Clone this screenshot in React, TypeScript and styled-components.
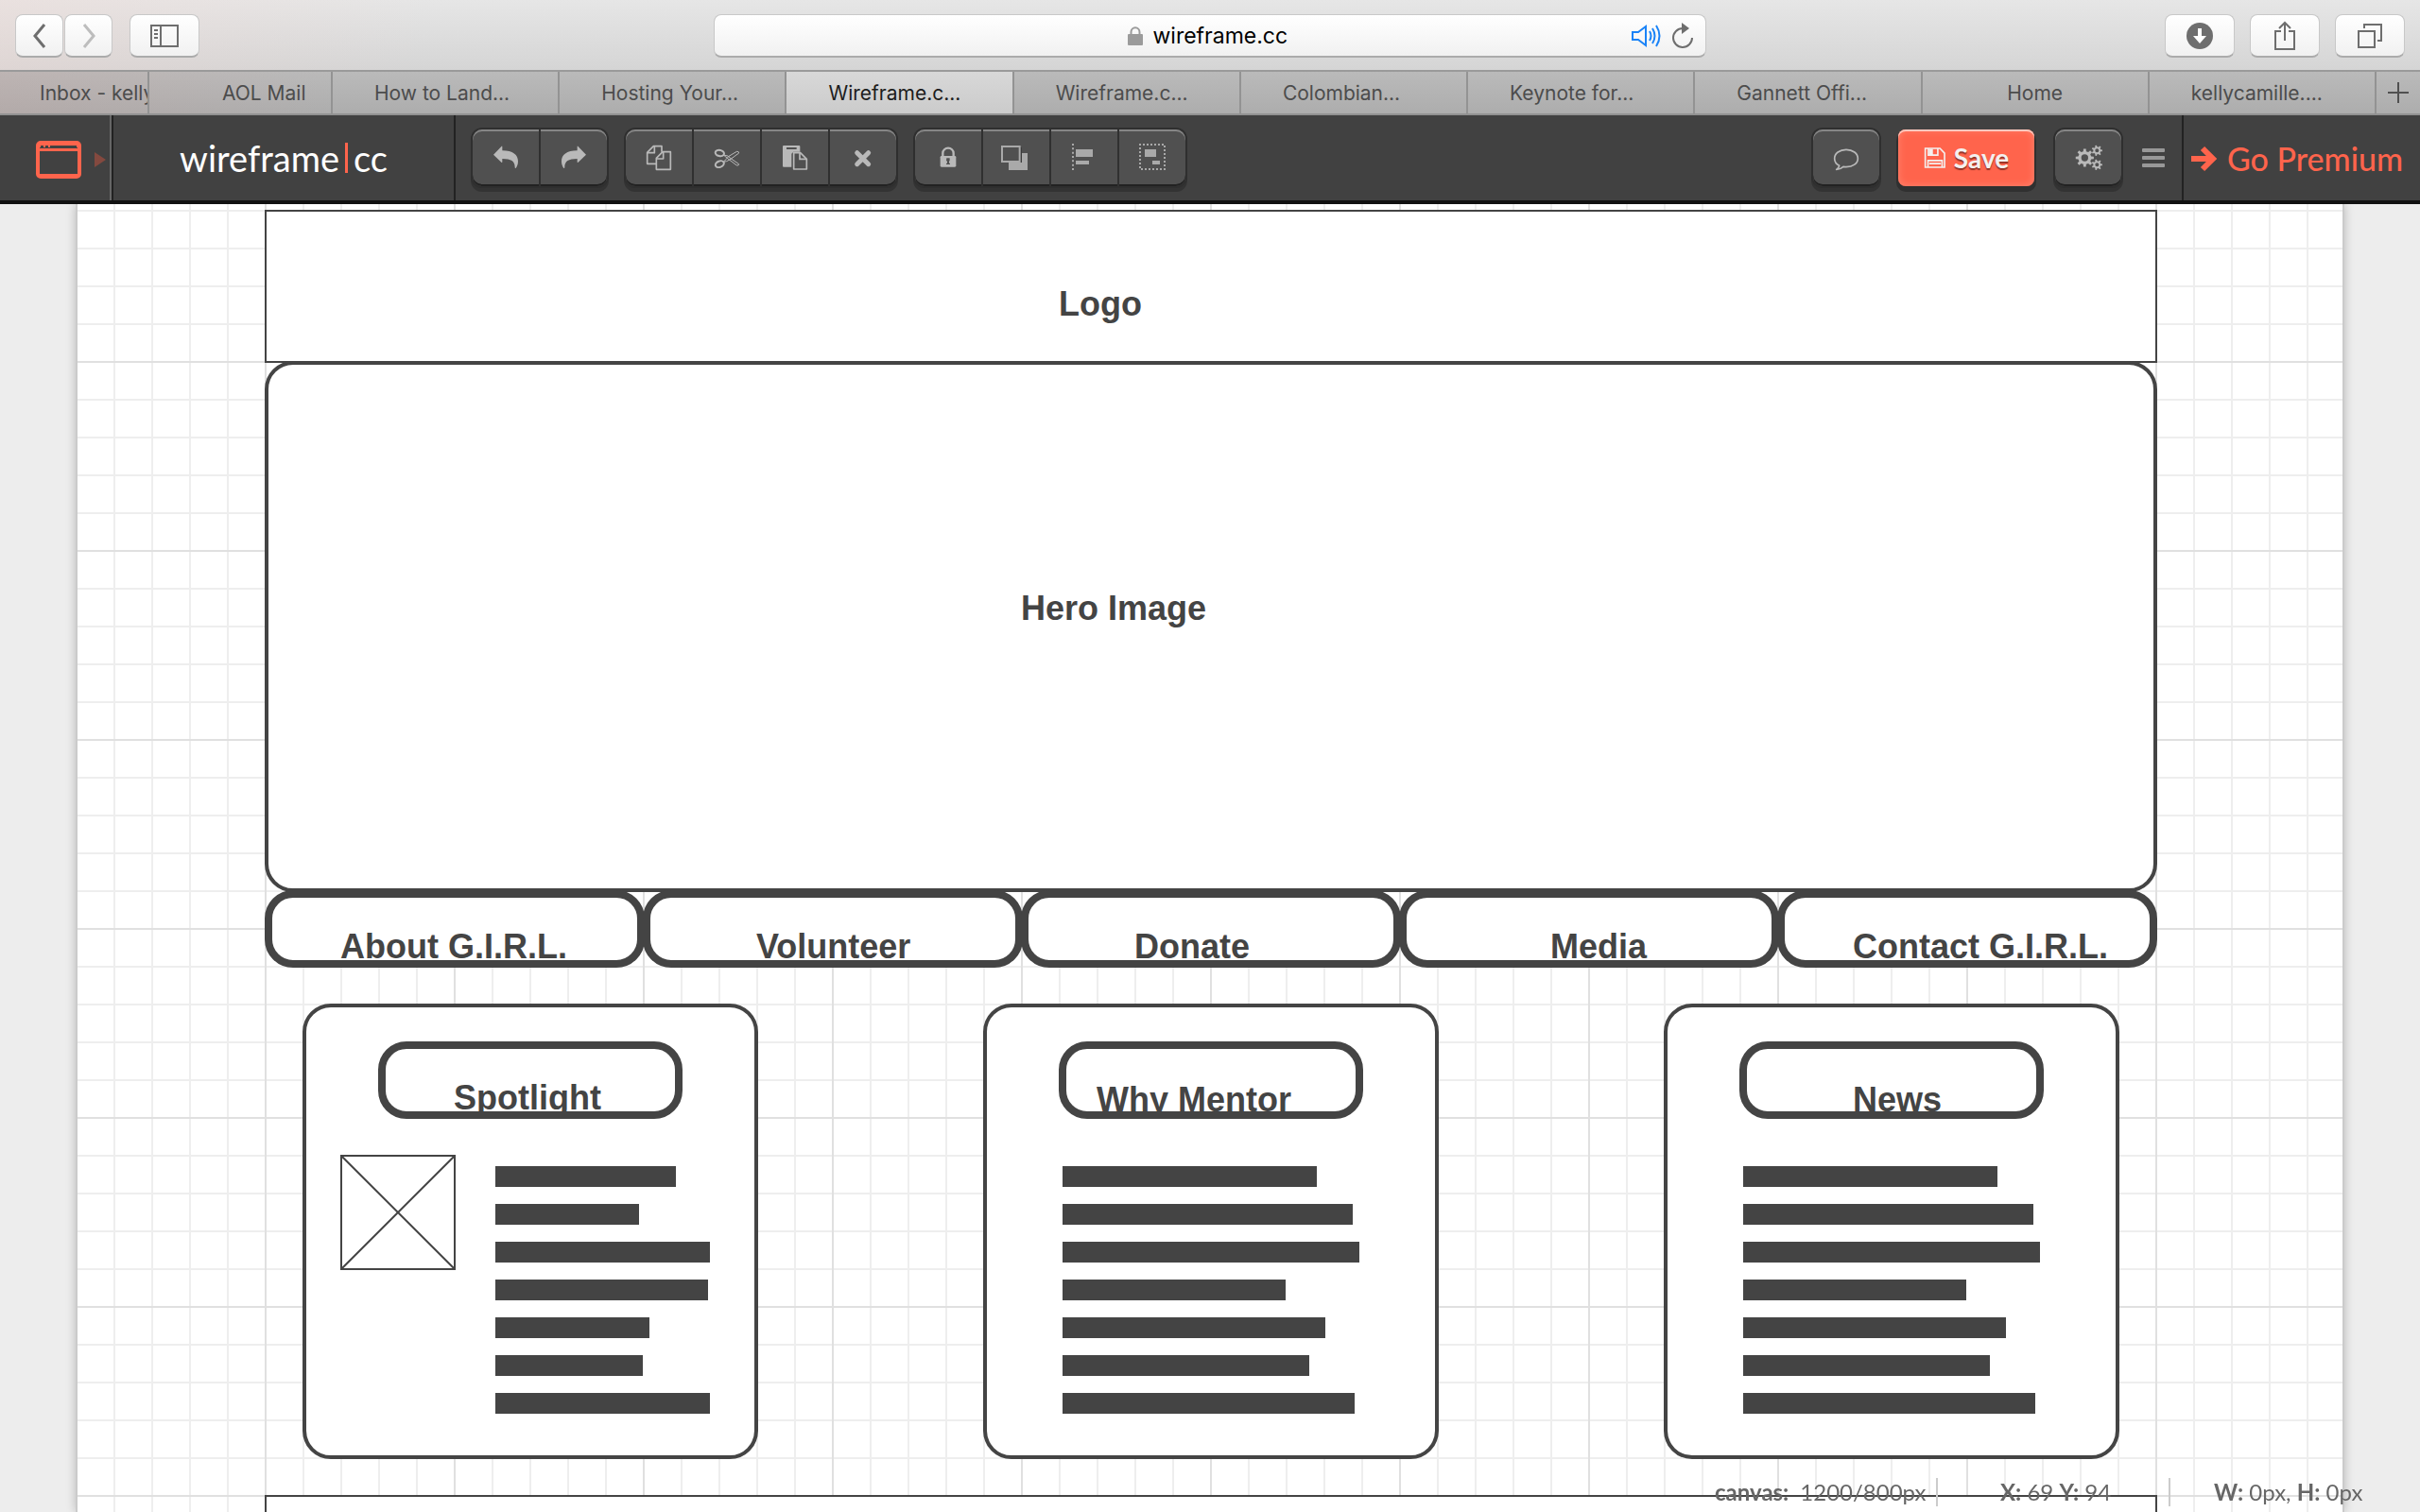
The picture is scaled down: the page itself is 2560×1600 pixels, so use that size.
import React from 'react';
import styled, { createGlobalStyle, css } from 'styled-components';

const INK = '#444444';
const ACCENT = '#ff644c';

const GlobalStyle = createGlobalStyle`
  *, *::before, *::after { box-sizing: border-box; }
  html, body, #root { height: 100%; }
  body { margin: 0; overflow: hidden; background: #ededed; }
  button, input { font: inherit; color: inherit; margin: 0; padding: 0; border: 0; background: none; }
  a { color: inherit; text-decoration: none; }
  svg { display: block; flex: none; }
  h2, p { margin: 0; font: inherit; }
`;

const Page = styled.div`
  display: flex;
  flex-direction: column;
  height: 100vh;
  overflow: hidden;
  font-family: Inter, Roboto, sans-serif;
`;

/* ---------- browser chrome ---------- */

const BrowserBar = styled.header`
  flex: none;
  display: flex;
  align-items: center;
  height: 76px;
  padding: 2px 16px 0;
  border-bottom: 2px solid #9a9a9a;
  background:
    linear-gradient(100deg, rgba(240, 215, 210, 0.35), rgba(240, 215, 210, 0) 18%),
    linear-gradient(#e6e6e6, #d5d5d5);
`;

const BarSide = styled.div<{ $end?: boolean }>`
  flex: 1;
  display: flex;
  gap: ${p => (p.$end ? 16 : 18)}px;
  justify-content: ${p => (p.$end ? 'flex-end' : 'flex-start')};
`;

const chromeBox = css`
  height: 46px;
  border: 1px solid #c8c8c8;
  border-bottom: 2px solid #ababab;
  border-radius: 8px;
  background: linear-gradient(#ffffff, #f1f1f1);
`;

const ChromeButton = styled.button<{ $narrow?: boolean }>`
  ${chromeBox}
  display: flex;
  align-items: center;
  justify-content: center;
  width: ${p => (p.$narrow ? 51 : 74)}px;
  color: #6e6e6e;
  &:disabled { color: #bdbdbd; }
`;

const ButtonPair = styled.div`
  display: flex;
  gap: 1px;
`;

const AddressBar = styled.form`
  ${chromeBox}
  flex: 0 0 41vw;
  display: grid;
  grid-template-columns: 1fr auto 1fr;
  align-items: center;
  padding: 0 12px;
`;

const AddressField = styled.label`
  grid-column: 2;
  display: flex;
  align-items: center;
  gap: 11px;
`;

const AddressInput = styled.input`
  width: 148px;
  height: 40px;
  font-size: 23px;
  color: #000;
  outline: none;
`;

const AddressActions = styled.div`
  display: flex;
  justify-content: flex-end;
  align-items: center;
  gap: 10px;
`;

const PlainButton = styled.button`
  display: flex;
`;

const TabStrip = styled.nav`
  flex: none;
  display: flex;
  height: 46px;
  border-bottom: 2px solid #929292;
  background:
    linear-gradient(90deg, rgba(200, 160, 155, 0.22), rgba(200, 160, 155, 0) 14%),
    linear-gradient(#bababa, #adadad);
`;

const Tab = styled.a<{ $active?: boolean; $width?: number; $start?: boolean }>`
  flex: ${p => (p.$width ? `0 0 ${p.$width}px` : '1 1 0')};
  display: flex;
  align-items: center;
  justify-content: ${p => (p.$start ? 'flex-start' : 'center')};
  padding-top: 2px;
  min-width: 0;
  overflow: hidden;
  white-space: nowrap;
  border-right: 2px solid #939393;
  font-size: 21px;
  line-height: 28px;
  color: ${p => (p.$active ? '#1c1c1c' : '#4c4c4c')};
  background: ${p => (p.$active ? 'linear-gradient(#d8d8d8, #cbcbcb)' : 'none')};
`;

const TabText = styled.span<{ $indent?: number }>`
  padding-left: ${p => p.$indent ?? 0}px;
`;

const NewTab = styled.button`
  flex: 0 0 46px;
  display: flex;
  align-items: center;
  justify-content: center;
  color: #505050;
`;

/* ---------- application toolbar ---------- */

const AppBar = styled.header`
  flex: none;
  position: relative;
  display: flex;
  align-items: stretch;
  height: 94px;
  border-bottom: 4px solid #111;
  background: #414141;
  font-family: Lato, sans-serif;
`;

const DeviceButton = styled.button`
  display: flex;
  align-items: center;
  gap: 14px;
  width: 120px;
  padding: 4px 0 0 38px;
  border-right: 2px solid #222;
  box-shadow: inset -2px 0 0 #666;
  color: ${ACCENT};
`;

const Brand = styled.a`
  display: flex;
  align-items: center;
  justify-content: center;
  width: 362px;
  border-right: 2px solid #222;
  font-size: 38px;
  line-height: 44px;
  color: #fff;
`;

const BrandBar = styled.span`
  width: 3px;
  height: 32px;
  margin: 0 6px;
  background: ${ACCENT};
`;

const Tools = styled.div`
  flex: 1;
  display: flex;
  align-items: center;
  gap: 20px;
  padding: 0 18px;
`;

const ToolGroup = styled.div`
  display: flex;
  gap: 2px;
  height: 60px;
  border-radius: 10px;
  background: #303030;
  box-shadow: 0 0 0 2px #2f2f2f, 0 4px 0 2px #333;
`;

const Spacer = styled.div`
  flex: 1;
`;

const ToolButton = styled.button`
  display: flex;
  align-items: center;
  justify-content: center;
  width: 70px;
  height: 60px;
  color: #b9b9b9;
  background: #505050;
  box-shadow: inset 0 2px 0 #858585, inset 0 -2px 0 #222;
  &:first-child { border-radius: 10px 0 0 10px; }
  &:last-child { border-radius: 0 10px 10px 0; }
  &:only-child { border-radius: 10px; }
`;

const SaveButton = styled.button`
  display: flex;
  align-items: center;
  justify-content: center;
  gap: 8px;
  width: 144px;
  height: 60px;
  margin-right: 2px;
  border-radius: 8px;
  font-size: 28px;
  font-weight: 700;
  color: #f4f0ef;
  text-shadow: 0 2px 1px rgba(120, 40, 30, 0.8);
  background: ${ACCENT};
  box-shadow: inset 0 2px 0 #ffc9bf, inset 0 0 8px #ff8672, 0 4px 0 2px #303030;
`;

const MenuButton = styled.button`
  display: flex;
  flex-direction: column;
  gap: 4px;
  width: 24px;
  margin-left: 2px;
`;

const MenuLine = styled.span`
  height: 4px;
  border-radius: 1px;
  background: #989898;
`;

const Premium = styled.a`
  display: flex;
  align-items: center;
  gap: 10px;
  width: 252px;
  padding: 2px 0 0 8px;
  border-left: 2px solid #222;
  font-size: 34px;
  line-height: 44px;
  font-weight: 500;
  white-space: nowrap;
  color: ${ACCENT};
`;

/* ---------- drawing canvas ---------- */

const Canvas = styled.main`
  flex: 1;
  min-height: 0;
  overflow: hidden;
  margin: 0 80px;
  padding: 6px 196px 0 198px;
  border: solid #cbcbcb;
  border-width: 0 2px;
  box-shadow: 0 0 10px rgba(0, 0, 0, 0.22);
  color: ${INK};
  font-family: "Liberation Sans", Arial, sans-serif;
  background-color: #fff;
  background-origin: border-box;
  background-image:
    linear-gradient(90deg, #e0e0e0 2px, transparent 2px),
    linear-gradient(#e0e0e0 2px, transparent 2px),
    linear-gradient(90deg, #eeeeee 2px, transparent 2px),
    linear-gradient(#eeeeee 2px, transparent 2px);
  background-size: 200px 200px, 200px 200px, 40px 40px, 40px 40px;
  background-position: 0 0, 0 166px, 0 0, 0 6px;
`;

const Shape = styled.section<{ $line: number; $round?: boolean }>`
  overflow: hidden;
  border: ${p => p.$line}px solid ${INK};
  border-radius: ${p => (p.$round ? 30 : 0)}px;
  background: #fff;
`;

const LogoArea = styled(Shape)`
  height: 162px;
  padding: 78px 0 0 838px;
`;

const HeroArea = styled(Shape)`
  height: 562px;
  margin-top: -2px;
  padding: 238px 0 0 796px;
`;

const FooterArea = styled(Shape)`
  height: 400px;
  margin-top: 38px;
`;

const Caption = styled.h2<{ $inset?: number }>`
  padding-left: ${p => p.$inset ?? 0}px;
  font-size: 36px;
  line-height: 40px;
  font-weight: 700;
  white-space: nowrap;
`;

const NavRow = styled.nav`
  display: flex;
  margin-top: -2px;
`;

const Pill = styled.a<{ $drop?: number }>`
  display: block;
  flex: 1 1 0;
  min-width: 0;
  height: 82px;
  padding-top: ${p => p.$drop ?? 32}px;
  overflow: hidden;
  border: 8px solid ${INK};
  border-radius: 30px;
  background: #fff;
  & + & { margin-left: -2px; }
`;

const CardRow = styled.div`
  display: flex;
  justify-content: space-between;
  margin-top: 38px;
  padding: 0 40px;
`;

const Card = styled(Shape)`
  flex: 0 1 482px;
  padding: 36px 36px 44px;
`;

const CardTitle = styled.div`
  display: flex;
  margin: 0 40px 38px;
`;

const CardBody = styled.div<{ $media?: boolean }>`
  display: flex;
  gap: 42px;
  padding-left: ${p => (p.$media ? 0 : 44)}px;
`;

const Placeholder = styled.svg`
  width: 122px;
  height: 122px;
  border: 2px solid ${INK};
`;

const Lines = styled.div`
  display: flex;
  flex-direction: column;
  gap: 18px;
  padding-top: 12px;
`;

const Line = styled.div<{ $w: number }>`
  width: ${p => p.$w}px;
  height: 22px;
  background: ${INK};
`;

const Status = styled.footer`
  position: fixed;
  right: 0;
  bottom: 6px;
  display: flex;
  height: 30px;
  font: 24px/30px Lato, sans-serif;
  color: #666;
`;

const StatusCell = styled.p<{ $w: number; $pad: number }>`
  display: flex;
  gap: 12px;
  width: ${p => p.$w}px;
  padding-left: ${p => p.$pad}px;
  white-space: nowrap;
  border-right: 2px solid #ccc;
  &:last-child { border-right: 0; }
`;

/* ---------- icons ---------- */

const Icon = ({ cx, children }: { cx: number; children: React.ReactNode }) => (
  <svg width="32" height="32" viewBox={`${cx - 48} 45 96 96`} fill="currentColor" aria-hidden="true">
    {children}
  </svg>
);

function gear(cx: number, cy: number, outer: number, inner: number, hole: number, teeth: number) {
  const pts: string[] = [];
  const step = (Math.PI * 2) / teeth;
  for (let i = 0; i < teeth; i++) {
    const a = i * step;
    [[-0.28, inner], [-0.18, outer], [0.18, outer], [0.28, inner]].forEach(([o, r]) => {
      pts.push(`${(cx + Math.cos(a + o * step) * r).toFixed(1)} ${(cy + Math.sin(a + o * step) * r).toFixed(1)}`);
    });
  }
  return `M${pts.join('L')}ZM${cx - hole} ${cy}a${hole} ${hole} 0 1 0 ${hole * 2} 0a${hole} ${hole} 0 1 0 ${-hole * 2} 0Z`;
}

const UndoIcon = () => (
  <Icon cx={105}><path d="M66 83L92 56Q94 55 94 58V70C128 70 144 84 144 104C144 113 141 120 137 126Q134 127 134 123C134 104 122 96 94 96V106Q94 109 91 107Z" /></Icon>
);
const RedoIcon = () => (
  <Icon cx={321}><path d="M360 83L334 56Q332 55 332 58V70C298 70 282 84 282 104C282 113 285 120 289 126Q292 127 292 123C292 104 304 96 332 96V106Q332 109 335 107Z" /></Icon>
);
const CopyIcon = () => (
  <Icon cx={591}>
    <g fill="none" stroke="currentColor" strokeWidth="5" strokeLinejoin="round">
      <path d="M582 112H554V76L574 56H600V74" /><path d="M555 77H577V57" />
      <path d="M603 74H628V130H583V94Z" /><path d="M584 96H605V75" />
    </g>
  </Icon>
);
const CutIcon = () => (
  <Icon cx={87}>
    <g fill="none" stroke="currentColor">
      <ellipse cx="64" cy="78" rx="14" ry="9.5" strokeWidth="6" transform="rotate(12 64 78)" />
      <ellipse cx="64" cy="113" rx="14" ry="9.5" strokeWidth="6" transform="rotate(-22 64 113)" />
      <path d="M76 84L93 98L118 117Q125 118 125 113L99 95L90 87Z" strokeWidth="3" />
      <path d="M76 106L93 88L118 73Q125 72 125 78L99 97L86 104Z" strokeWidth="3" />
    </g>
  </Icon>
);
const PasteIcon = () => (
  <Icon cx={303}>
    <path fillRule="evenodd" d="M267 54H316Q319 54 319 57V74H298L292 80V122H267Q264 122 264 119V57Q264 54 267 54ZM276 60V66H308V60Z" />
    <path d="M299 77H320L340 97V129H299Z" fill="none" stroke="currentColor" strokeWidth="5" strokeLinejoin="round" />
    <path d="M318 78V97H339" fill="none" stroke="currentColor" strokeWidth="5" />
  </Icon>
);
const DeleteIcon = () => (
  <Icon cx={519}><path d="M500 77L536 113M536 77L500 113" stroke="currentColor" strokeWidth="15" strokeLinecap="round" /></Icon>
);
const LockIcon = () => (
  <Icon cx={789}>
    <path d="M772 88V78a17 16 0 0 1 34 0V88" fill="none" stroke="currentColor" strokeWidth="7" />
    <rect x="764" y="87" width="50" height="35" rx="4" />
    <path d="M784 94h10v8l-2 2v6h3v4h-12v-4h3v-6l-3-2z" fill="#505050" />
  </Icon>
);
const OrderIcon = () => (
  <Icon cx={225}>
    <path fill="#a9a9a9" d="M201 108H243V78H261V132H201Z" />
    <path fill="#3b3b3b" d="M183 108H243V60H237V102H183Z" />
    <rect x="180" y="57" width="56" height="48" fill="#505050" stroke="#a9a9a9" strokeWidth="6" />
  </Icon>
);
const AlignIcon = () => (
  <Icon cx={441}>
    <path d="M405 48V132" stroke="#a9a9a9" strokeWidth="6" strokeDasharray="6 7" />
    <path fill="#a9a9a9" d="M414 66H468V90H414ZM414 102H456V114H414Z" />
  </Icon>
);
const GroupIcon = () => (
  <Icon cx={657}>
    <rect x="618" y="51" width="78" height="78" fill="none" stroke="#a9a9a9" strokeWidth="6" strokeDasharray="6 6" strokeDashoffset="3" />
    <path fill="#a9a9a9" d="M633 66H669V90H633ZM657 102H681V114H657Z" />
  </Icon>
);
const CommentIcon = () => (
  <Icon cx={129}>
    <path d="M107 118C96 112 92 104 92 95C92 79 108 67 129 67S166 79 166 95S150 122 129 122Q124 122 120 121Q112 129 98 130Q106 125 107 118Z" fill="none" stroke="currentColor" strokeWidth="5" strokeLinejoin="round" />
  </Icon>
);
const GearsIcon = () => (
  <Icon cx={897}>
    <path fillRule="evenodd" d={gear(886, 93, 29, 21, 11, 8)} />
    <path fillRule="evenodd" d={gear(925, 70, 17, 12, 6, 7)} />
    <path fillRule="evenodd" d={gear(925, 115, 17, 12, 6, 7)} />
  </Icon>
);
const FloppyIcon = () => (
  <svg width="24" height="26" viewBox="370 56 74 74" fill="none" stroke="currentColor" strokeWidth="5" aria-hidden="true">
    <path d="M375 62H423L438 78V124H375Z" />
    <path d="M385 62V84H416V62" />
    <path d="M387 64H400V84H387Z" fill="currentColor" stroke="none" />
    <path d="M384 124V102H430V124M388 112H426" />
  </svg>
);

const Stroke = ({ w, h, d, width = 2 }: { w: number; h: number; d: string; width?: number }) => (
  <svg width={w} height={h} viewBox={`0 0 ${w} ${h}`} fill="none" stroke="currentColor" strokeWidth={width} aria-hidden="true">
    <path d={d} />
  </svg>
);

/* ---------- data ---------- */

const TAB_INDENT = 44;

const tabs = [
  { name: 'Inbox - kelly', width: 158, indent: 42 },
  { name: 'AOL Mail', width: 194, indent: 77 },
  { name: 'How to Land...', indent: TAB_INDENT },
  { name: 'Hosting Your...', indent: TAB_INDENT },
  { name: 'Wireframe.c...', indent: TAB_INDENT, active: true },
  { name: 'Wireframe.c...', indent: TAB_INDENT },
  { name: 'Colombian...', indent: TAB_INDENT },
  { name: 'Keynote for...', indent: TAB_INDENT },
  { name: 'Gannett Offi...', indent: TAB_INDENT },
  { name: 'Home' },
  { name: 'kellycamille....', indent: TAB_INDENT },
];

const toolGroups = [
  [
    { label: 'Undo', icon: <UndoIcon /> },
    { label: 'Redo', icon: <RedoIcon /> },
  ],
  [
    { label: 'Copy', icon: <CopyIcon /> },
    { label: 'Cut', icon: <CutIcon /> },
    { label: 'Paste', icon: <PasteIcon /> },
    { label: 'Delete', icon: <DeleteIcon /> },
  ],
  [
    { label: 'Lock', icon: <LockIcon /> },
    { label: 'Order', icon: <OrderIcon /> },
    { label: 'Align', icon: <AlignIcon /> },
    { label: 'Group', icon: <GroupIcon /> },
  ],
];

const navItems = [
  { name: 'About G.I.R.L.', inset: 72 },
  { name: 'Volunteer', inset: 112 },
  { name: 'Donate', inset: 112 },
  { name: 'Media', inset: 152 },
  { name: 'Contact G.I.R.L.', inset: 72 },
];

const paragraph = [269, 307, 314, 236, 278, 261, 309];

const cards = [
  { title: 'Spotlight', inset: 72, drop: 32, media: true, lines: [191, 152, 227, 225, 163, 156, 227] },
  { title: 'Why Mentor', inset: 32, drop: 34, lines: paragraph },
  { title: 'News', inset: 112, drop: 34, lines: paragraph },
];

export default function App() {
  return (
    <Page>
      <GlobalStyle />
      <BrowserBar>
        <BarSide>
          <ButtonPair>
            <ChromeButton $narrow aria-label="Back"><Stroke w={16} h={26} d="M13 1L3 13L13 25" width={3} /></ChromeButton>
            <ChromeButton $narrow disabled aria-label="Forward"><Stroke w={16} h={26} d="M3 1L13 13L3 25" width={3} /></ChromeButton>
          </ButtonPair>
          <ChromeButton aria-label="Sidebar">
            <Stroke w={30} h={24} d="M1 1H29V23H1ZM11 1V23M4 6H8M4 10H8M4 14H8" />
          </ChromeButton>
        </BarSide>
        <AddressBar onSubmit={e => e.preventDefault()}>
          <AddressField>
            <svg width="16" height="20" viewBox="0 0 16 20" aria-hidden="true">
              <path d="M3.500 9V6a4.500 4.800 0 0 1 9 0V9" fill="none" stroke="#9b9b9b" strokeWidth="2" />
              <rect y="8" width="16" height="12" rx="1" fill="#9b9b9b" />
            </svg>
            <AddressInput aria-label="Address" defaultValue="wireframe.cc" />
          </AddressField>
          <AddressActions>
            <PlainButton type="button" aria-label="Mute">
              <svg width="32" height="24" viewBox="0 0 32 24" fill="none" stroke="#1a83f7" strokeWidth="2" aria-hidden="true">
                <path d="M1 8H7L15 2V22L7 16H1ZM19 7Q22 12 19 17M22 4Q27 12 22 20M26 1Q33 12 26 23" />
              </svg>
            </PlainButton>
            <PlainButton type="button" aria-label="Reload">
              <svg width="24" height="28" viewBox="0 0 24 28" aria-hidden="true">
                <path d="M14 6H12A10 10 0 1 0 22 16" fill="none" stroke="#6e6e6e" strokeWidth="2" />
                <path d="M11 0L19 6L11 12Z" fill="#6e6e6e" />
              </svg>
            </PlainButton>
          </AddressActions>
        </AddressBar>
        <BarSide $end>
          <ChromeButton aria-label="Downloads">
            <svg width="28" height="28" viewBox="0 0 28 28" aria-hidden="true">
              <circle cx="14" cy="14" r="14" fill="#6e6e6e" />
              <path d="M12 6H16V14H21L14 22L7 14H12Z" fill="#fff" />
            </svg>
          </ChromeButton>
          <ChromeButton aria-label="Share"><Stroke w={24} h={32} d="M8 11H2V30H22V11H16M12 21V2M6 8L12 2L18 8" /></ChromeButton>
          <ChromeButton aria-label="All tabs"><Stroke w={26} h={26} d="M1 8H18V25H1ZM7 5V1H25V18H21" /></ChromeButton>
        </BarSide>
      </BrowserBar>

      <TabStrip>
        {tabs.map((t, i) => (
          <Tab key={i} href="#" $active={t.active} $width={t.width} $start={t.indent !== undefined}>
            <TabText $indent={t.indent}>{t.name}</TabText>
          </Tab>
        ))}
        <NewTab aria-label="New tab"><Stroke w={22} h={22} d="M11 0V22M0 11H22" /></NewTab>
      </TabStrip>

      <AppBar>
        <DeviceButton aria-label="Device">
          <svg width="48" height="40" viewBox="0 0 48 40" aria-hidden="true">
            <rect x="2" y="2" width="44" height="36" rx="3" fill="none" stroke={ACCENT} strokeWidth="4" />
            <path d="M2 9.500H46" stroke={ACCENT} strokeWidth="3" />
            <path d="M2 37H46" stroke={ACCENT} strokeWidth="4" />
            <path d="M2 5.500H46" stroke={ACCENT} strokeWidth="3" />
            <path d="M5 6H8M10 6H13M15 6H43" stroke="#414141" strokeWidth="2" />
          </svg>
          <svg width="12" height="16" viewBox="0 0 12 16" aria-hidden="true"><path d="M0 0L12 8L0 16Z" fill="#84493f" /></svg>
        </DeviceButton>
        <Brand href="#">wireframe<BrandBar />cc</Brand>
        <Tools>
          {toolGroups.map((group, i) => (
            <ToolGroup key={i}>
              {group.map(t => <ToolButton key={t.label} aria-label={t.label}>{t.icon}</ToolButton>)}
            </ToolGroup>
          ))}
          <Spacer />
          <ToolGroup><ToolButton aria-label="Comments"><CommentIcon /></ToolButton></ToolGroup>
          <SaveButton><FloppyIcon />Save</SaveButton>
          <ToolGroup><ToolButton aria-label="Settings"><GearsIcon /></ToolButton></ToolGroup>
          <MenuButton aria-label="Menu"><MenuLine /><MenuLine /><MenuLine /></MenuButton>
        </Tools>
        <Premium href="#">
          <Stroke w={28} h={28} d="M0 14H24M12 3L23 14L12 25" width={6} />
          Go Premium
        </Premium>
      </AppBar>

      <Canvas>
        <LogoArea $line={2}><Caption>Logo</Caption></LogoArea>
        <HeroArea $line={4} $round><Caption>Hero Image</Caption></HeroArea>
        <NavRow>
          {navItems.map(n => (
            <Pill key={n.name} href="#"><Caption $inset={n.inset}>{n.name}</Caption></Pill>
          ))}
        </NavRow>
        <CardRow>
          {cards.map(c => (
            <Card key={c.title} $line={4} $round>
              <CardTitle>
                <Pill href="#" $drop={c.drop}><Caption $inset={c.inset}>{c.title}</Caption></Pill>
              </CardTitle>
              <CardBody $media={c.media}>
                {c.media && (
                  <Placeholder viewBox="0 0 118 118" aria-hidden="true">
                    <path d="M0 0L118 118M118 0L0 118" stroke={INK} strokeWidth="2" />
                  </Placeholder>
                )}
                <Lines>
                  {c.lines.map((w, i) => <Line key={i} $w={w} />)}
                </Lines>
              </CardBody>
            </Card>
          ))}
        </CardRow>
        <FooterArea $line={2} />
      </Canvas>

      <Status>
        <StatusCell $w={236} $pad={0}><b>canvas:</b> 1200/800px</StatusCell>
        <StatusCell $w={246} $pad={66}><span><b>X:</b> 69 <b>Y:</b> 94</span></StatusCell>
        <StatusCell $w={264} $pad={46}><span><b>W:</b> 0px, <b>H:</b> 0px</span></StatusCell>
      </Status>
    </Page>
  );
}
